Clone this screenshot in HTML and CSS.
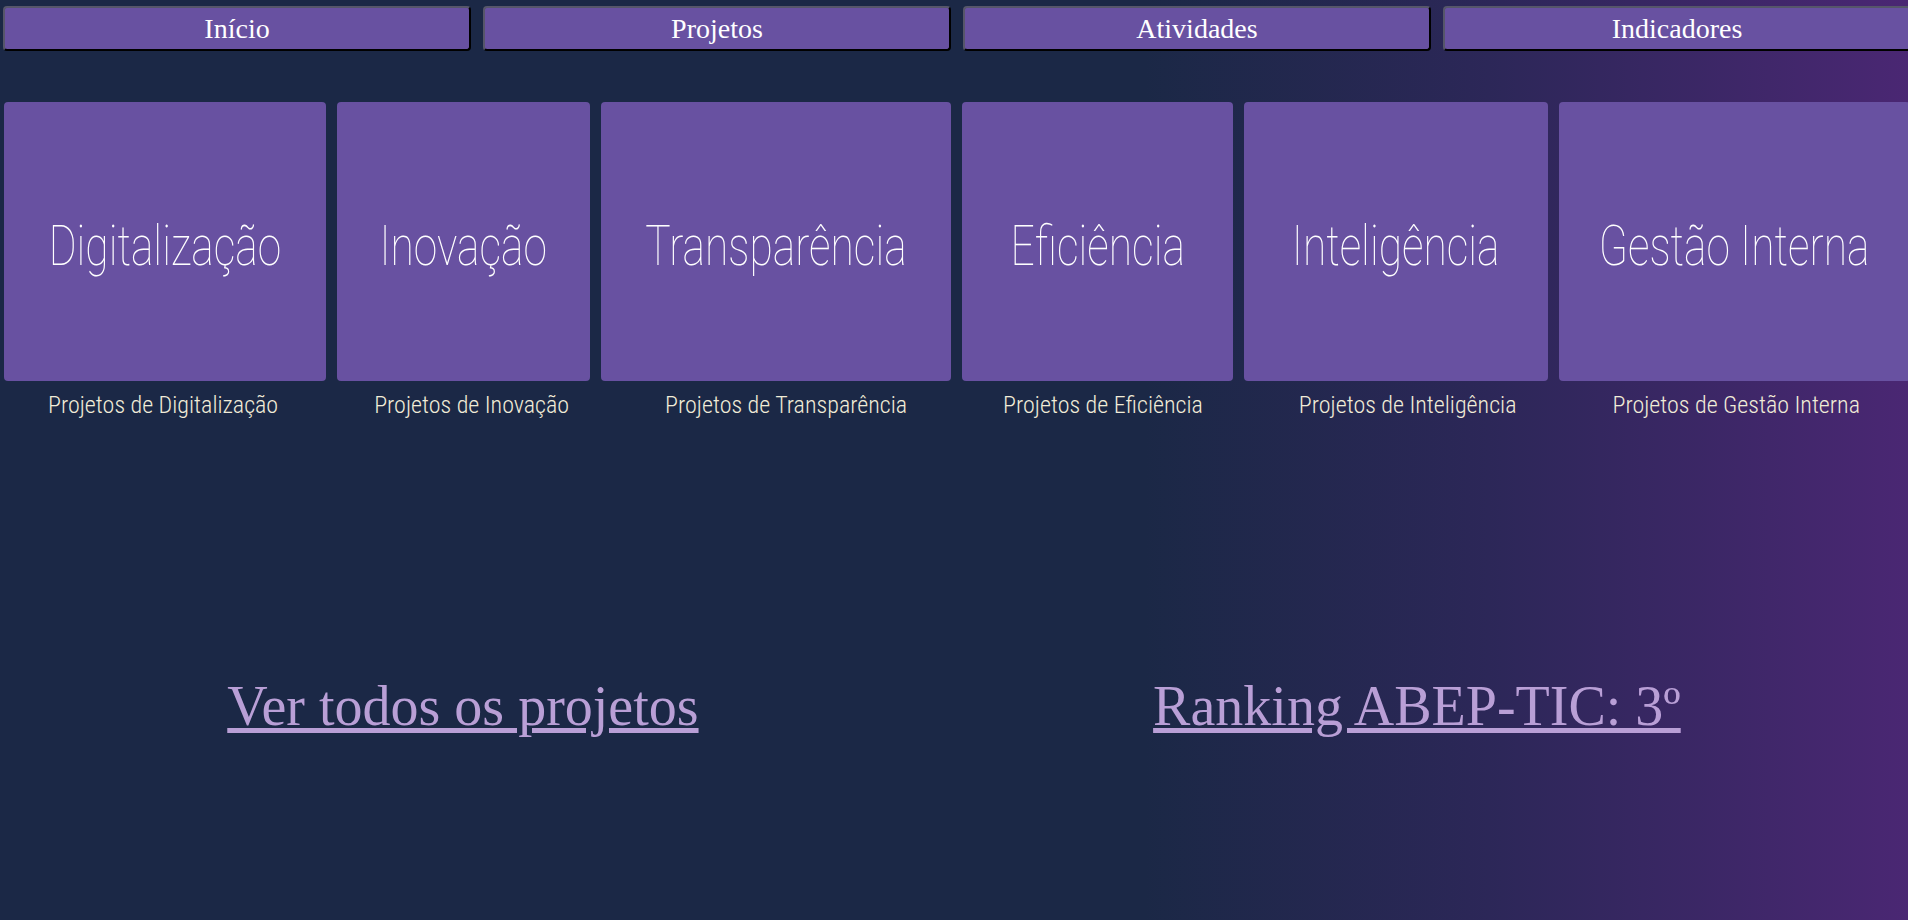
FILE: index.html
```html
<!DOCTYPE html>
<html lang="pt-BR">
<head>
<meta charset="utf-8">
<title>Projetos</title>
<link rel="stylesheet" href="styles.css">
</head>
<body>
<nav class="nav">
  <button class="nav-btn">Início</button>
  <button class="nav-btn">Projetos</button>
  <button class="nav-btn">Atividades</button>
  <button class="nav-btn">Indicadores</button>
</nav>
<section class="tiles">
  <a class="tile tile-dig" href="#"><span class="tile-title">Digitalização</span></a>
  <a class="tile tile-ino" href="#"><span class="tile-title">Inovação</span></a>
  <a class="tile tile-tra" href="#"><span class="tile-title">Transparência</span></a>
  <a class="tile tile-efi" href="#"><span class="tile-title">Eficiência</span></a>
  <a class="tile tile-int" href="#"><span class="tile-title">Inteligência</span></a>
  <a class="tile tile-ges" href="#"><span class="tile-title">Gestão Interna</span></a>
</section>
<section class="captions">
  <p class="caption">Projetos de Digitalização</p>
  <p class="caption">Projetos de Inovação</p>
  <p class="caption">Projetos de Transparência</p>
  <p class="caption">Projetos de Eficiência</p>
  <p class="caption">Projetos de Inteligência</p>
  <p class="caption">Projetos de Gestão Interna</p>
</section>
<section class="links">
  <a class="big-link" href="#">Ver todos os projetos</a>
  <a class="big-link" href="#">Ranking ABEP-TIC: 3º</a>
</section>
</body>
</html>
```
FILE: styles.css
```css
html, body {
  margin: 0;
  padding: 0;
  height: 100%;
}
body {
  overflow: hidden;
  background: linear-gradient(to right, #1b2846 0%, #1b2846 60%, #2c2758 78%, #4a2773 100%);
  font-family: "Liberation Serif", "Times New Roman", serif;
  color: #fff;
}
.nav {
  display: flex;
  gap: 12px;
  padding: 6px 0 0 3px;
  white-space: nowrap;
}
.nav-btn {
  flex: 0 0 468px;
  height: 45px;
  box-sizing: border-box;
  background: #6851a1;
  color: #fff;
  font-family: "Liberation Serif", "Times New Roman", serif;
  font-size: 28px;
  border: 2px solid;
  border-color: #56566a #000 #000 #56566a;
  border-radius: 4px;
  padding: 0;
  line-height: 1;
}
.tiles {
  display: flex;
  gap: 11px;
  margin-top: 51px;
  padding-left: 4px;
  white-space: nowrap;
}
.tile {
  flex: 0 0 auto;
  height: 279px;
  box-sizing: border-box;
  display: flex;
  align-items: center;
  justify-content: center;
  background: #6851a1;
  border-radius: 4px;
  color: #fff;
  text-decoration: none;
  overflow: visible;
}
.tile-dig { width: 322px; }
.tile-ino { width: 253px; }
.tile-tra { width: 350px; }
.tile-efi { width: 271px; }
.tile-int { width: 304px; }
.tile-ges { width: 351px; }
.tile-title {
  display: inline-block;
  font-family: "Roboto", "DejaVu Sans", sans-serif;
  font-weight: 100;
  font-size: 56px;
  line-height: 1;
  margin-top: 8px;
  transform: scaleX(0.76);
  transform-origin: center;
}
.captions {
  display: flex;
  justify-content: space-around;
  margin-top: 10px;
  white-space: nowrap;
}
.caption {
  margin: 0;
  font-family: "Roboto Condensed", "Roboto", "DejaVu Sans", sans-serif;
  font-weight: 300;
  font-stretch: 75%;
  font-size: 24px;
  line-height: 29px;
  color: #f1ecd8;
}
.links {
  display: flex;
  justify-content: space-around;
  margin-top: 254px;
}
.big-link {
  font-family: "Liberation Serif", "Times New Roman", serif;
  font-size: 56px;
  color: #b99fd6;
  text-decoration: underline;
}
```
